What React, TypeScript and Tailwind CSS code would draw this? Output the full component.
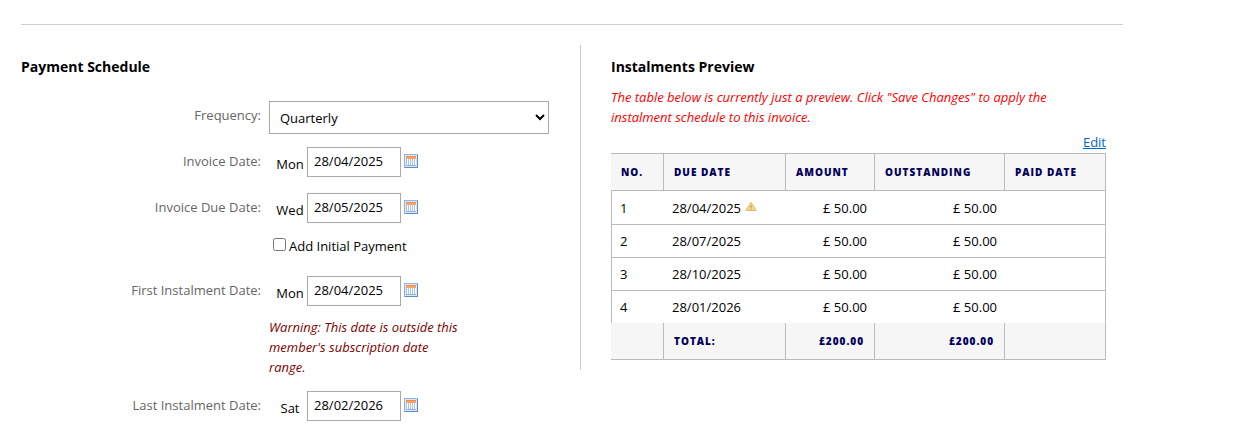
import { useState } from 'react'

const instalments = [
  { no: 1, dueDate: '28/04/2025', amount: '50.00', outstanding: '50.00', warn: true },
  { no: 2, dueDate: '28/07/2025', amount: '50.00', outstanding: '50.00', warn: false },
  { no: 3, dueDate: '28/10/2025', amount: '50.00', outstanding: '50.00', warn: false },
  { no: 4, dueDate: '28/01/2026', amount: '50.00', outstanding: '50.00', warn: false },
]

function CalendarIcon() {
  return (
    <svg width="14" height="14" viewBox="0 0 14 14" shapeRendering="crispEdges" aria-hidden="true">
      <rect width="14" height="14" fill="#8fb2e6" />
      <path d="M13 1h1v13H1v-1h12z" fill="#5f8bcc" />
      <rect x="1" y="1" width="12" height="12" fill="#dce9fa" />
      <rect x="2" y="2" width="10" height="10" fill="#ffffff" />
      <rect x="2" y="2" width="10" height="1" fill="#f58a4b" />
      <rect x="2" y="3" width="10" height="2" fill="#fba364" />
      <path d="M2 5h1v7H2zM4 5h1v7H4zM6 5h1v7H6zM8 5h1v7H8zM10 5h1v7h-1z" fill="#a9c3ea" />
      <rect x="2" y="11" width="10" height="1" fill="#8fb1e3" />
    </svg>
  )
}

function WarningIcon() {
  return (
    <svg width="12" height="12" viewBox="0 0 12 12" className="ml-1 inline-block align-baseline" role="img" aria-label="Warning">
      <path d="M6 1.2 11.2 9.5H.8z" fill="#f5d68c" stroke="#e2bc68" strokeWidth="1" strokeLinejoin="round" />
      <path d="M6 4v3M6 7.6v1" stroke="#b98f45" strokeWidth="1" />
    </svg>
  )
}

function FieldLabel({ id, children }: { id: string; children: React.ReactNode }) {
  return (
    <label htmlFor={id} className="w-60 shrink-0 pb-0.5 text-right text-[#666666]">
      {children}
    </label>
  )
}

function DateRow({ id, label, day, initial }: { id: string; label: string; day: string; initial: string }) {
  const [value, setValue] = useState(initial)

  return (
    <div className="flex items-center">
      <FieldLabel id={id}>{label}</FieldLabel>
      <span className="ml-3 w-[34px] pt-1 text-center leading-5">{day}</span>
      <input
        id={id}
        type="text"
        value={value}
        onChange={(e) => setValue(e.target.value)}
        className="h-[30px] w-[94px] border border-[#a9a9a9] bg-white px-1.5 pb-0.5"
      />
      <button type="button" aria-label={`Pick ${label}`} className="ml-[3px] pb-0.5">
        <CalendarIcon />
      </button>
    </div>
  )
}

function PaymentSchedule() {
  return (
    <section className="pt-3">
      <h2 className="text-sm leading-5 font-bold">Payment Schedule</h2>
      <form className="mt-6">
        <div className="flex items-start">
          <label htmlFor="frequency" className="w-60 shrink-0 pt-1 text-right text-[#666666]">
            Frequency:
          </label>
          <select
            id="frequency"
            defaultValue="Quarterly"
            className="ml-2 h-[33px] w-[280px] border border-[#a9a9a9] bg-white pl-1.5"
          >
            <option>Monthly</option>
            <option>Quarterly</option>
            <option>Annually</option>
          </select>
        </div>
        <div className="mt-[13px] space-y-4">
          <DateRow id="invoice-date" label="Invoice Date:" day="Mon" initial="28/04/2025" />
          <DateRow id="invoice-due-date" label="Invoice Due Date:" day="Wed" initial="28/05/2025" />
        </div>
        <div className="mt-[13px] ml-[252px] flex items-start">
          <input id="initial-payment" type="checkbox" className="mt-0.5 size-[13px]" />
          <label htmlFor="initial-payment" className="ml-[3px]">
            Add Initial Payment
          </label>
        </div>
        <div className="mt-5">
          <DateRow id="first-date" label="First Instalment Date:" day="Mon" initial="28/04/2025" />
        </div>
        <p className="mt-[11px] ml-[248px] w-[195px] text-[#800000] italic">
          Warning: This date is outside this member's subscription date range.
        </p>
        <div className="mt-3.5">
          <DateRow id="last-date" label="Last Instalment Date:" day="Sat" initial="28/02/2026" />
        </div>
      </form>
    </section>
  )
}

const headCell = 'border-y border-r border-[#bbbbbb] bg-[#f6f6f6] py-2 pl-2.5 text-left font-extrabold'
const footCell = 'border-b border-r border-[#bbbbbb] bg-[#f6f6f6] px-2.5 py-2 font-extrabold'

function InstalmentsPreview() {
  return (
    <section className="self-start border-l border-[#cccccc] pt-3 pr-[17px] pb-2.5 pl-[30px]">
      <h2 className="text-sm leading-5 font-bold">Instalments Preview</h2>
      <p className="mt-2.5 text-[#ff0000] italic">
        The table below is currently just a preview. Click "Save Changes" to apply the instalment schedule to this invoice.
      </p>
      <div className="mt-[5px] pb-px text-right leading-5">
        <a href="#edit" className="text-[#0066cc] underline">
          Edit
        </a>
      </div>
      <table className="w-full table-fixed border-separate border-spacing-0">
        <colgroup>
          <col className="w-[53px]" />
          <col className="w-[122px]" />
          <col className="w-[89px]" />
          <col className="w-[130px]" />
          <col />
        </colgroup>
        <thead className="text-[10px] leading-5 tracking-widest text-[#000059] uppercase">
          <tr>
            <th className={headCell}>No.</th>
            <th className={headCell}>Due Date</th>
            <th className={headCell}>Amount</th>
            <th className={headCell}>Outstanding</th>
            <th className={headCell}>Paid Date</th>
          </tr>
        </thead>
        <tbody className="[&_td]:border-b [&_td]:border-[#bbbbbb] [&_td]:py-1.5 [&_tr:last-child_td]:border-b-0">
          {instalments.map((row) => (
            <tr key={row.no} className="first:h-[34px]">
              <td className="border-l pl-2">{row.no}</td>
              <td className="pl-2">
                {row.dueDate}
                {row.warn && <WarningIcon />}
              </td>
              <td className="pr-2 text-right">£ {row.amount}</td>
              <td className="pr-2 text-right">£ {row.outstanding}</td>
              <td className="border-r" />
            </tr>
          ))}
        </tbody>
        <tfoot className="text-[10px] leading-5 tracking-widest text-[#000059] uppercase">
          <tr>
            <td className={footCell} />
            <td className={footCell}>Total:</td>
            <td className={`${footCell} text-right`}>£200.00</td>
            <td className={`${footCell} text-right`}>£200.00</td>
            <td className={footCell} />
          </tr>
        </tfoot>
      </table>
    </section>
  )
}

export default function App() {
  return (
    <main className="max-w-[1123px] bg-white pb-6 pl-[21px] font-['Open_Sans','Liberation_Sans',sans-serif] text-[13px] leading-5 text-black">
      <hr className="mt-6 border-[#cccccc]" />
      <div className="mt-5 grid grid-cols-[559fr_543fr]">
        <PaymentSchedule />
        <InstalmentsPreview />
      </div>
    </main>
  )
}
